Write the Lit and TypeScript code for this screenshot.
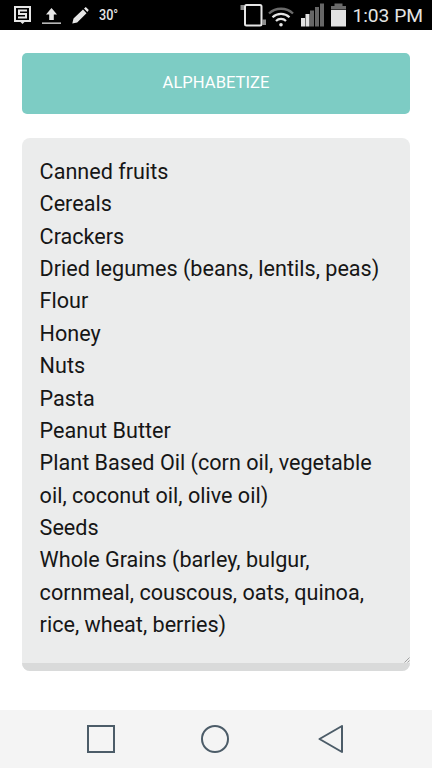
import { LitElement, html, css } from "lit";
import { customElement } from "lit/decorators.js";

const ITEMS = [
  "Canned fruits",
  "Cereals",
  "Crackers",
  "Dried legumes (beans, lentils, peas)",
  "Flour",
  "Honey",
  "Nuts",
  "Pasta",
  "Peanut Butter",
  "Plant Based Oil (corn oil, vegetable oil, coconut oil, olive oil)",
  "Seeds",
  "Whole Grains (barley, bulgur, cornmeal, couscous, oats, quinoa, rice, wheat, berries)",
];

@customElement("app-root")
export class AppRoot extends LitElement {
  static styles = css`
    :host {
      display: flex;
      flex-direction: column;
      width: 432px;
      height: 768px;
      overflow: hidden;
      background: #fff;
      font-family: Roboto, "Liberation Sans", sans-serif;
    }
    .status {
      height: 30px;
      flex: none;
      background: #000;
      color: #e6e6e6;
      display: flex;
      align-items: center;
      padding: 0 9px 0 14px;
      box-sizing: border-box;
    }
    .status svg { display: block; flex: none; }
    .left { display: flex; align-items: center; gap: 11px; }
    .temp {
      font-size: 15px;
      font-weight: 500;
      margin-left: -1px;
      margin-top: -1px;
      transform: scaleX(0.84);
      transform-origin: left;
    }
    .right { margin-left: auto; display: flex; align-items: center; }
    .wifi { margin-left: 2px; }
    .signal { margin-left: 7px; }
    .battery { margin-left: 7px; }
    .time { font-size: 19.2px; margin-left: 6px; margin-top: 1px; color: #e4e4e4; white-space: nowrap; }
    main {
      flex: 1;
      min-height: 0;
      padding: 23px 22px 0;
      display: flex;
      flex-direction: column;
      gap: 24px;
    }
    .btn {
      height: 61px;
      flex: none;
      box-sizing: border-box;
      padding-bottom: 3px;
      background: #7dccc4;
      border-radius: 5px;
      color: #fff;
      font-size: 16.6px;
      display: flex;
      align-items: center;
      justify-content: center;
    }
    .box {
      position: relative;
      height: 532.5px;
      flex: none;
      overflow: hidden;
      background: #ebecec;
      border-radius: 8px;
      display: flex;
      flex-direction: column;
      font-size: 21.6px;
      line-height: 32.36px;
      color: #161616;
    }
    .list { flex: 1; min-height: 0; padding: 18px 18px 0 17.6px; }
    .strip { height: 7.5px; flex: none; background: #d9dada; }
    .grip { position: absolute; right: 0; bottom: 7.5px; display: block; }
    nav {
      height: 58px;
      flex: none;
      background: #f4f4f4;
      display: flex;
      align-items: center;
      padding-left: 87px;
      gap: 86px;
    }
    nav svg { display: block; flex: none; }
    .back { margin-left: 3px; }
  `;

  render() {
    return html`
      <div class="status">
        <div class="left">
          <svg width="17" height="30" viewBox="14 0 17 30">
            <path fill-rule="evenodd" d="M14 6h17v16h-6.500l-2 2-2-2h-6.500z M16 8v12h13v-12z" fill="#e6e6e6"/>
            <path d="M18 9.500h9v2h-7v1.500h7v5.500h-9v-2h7v-1.500h-7z" fill="#e6e6e6"/>
          </svg>
          <svg width="19" height="30" viewBox="42 0 19 30">
            <path d="M51.500 8l5.500 6.500h-3.200v5.500h-4.600v-5.500h-3.200z" fill="#e6e6e6"/>
            <path d="M42 22.500h19v1.300h-19z" fill="#e6e6e6"/>
          </svg>
          <svg width="17" height="30" viewBox="72 0 17 30">
            <path d="M72.300 23.500l1.200-5 9.500-9 3.500 3.800-9.300 9.200z M84 8.500l1.800-1.500 3 3-1.500 2z" fill="#e6e6e6"/>
          </svg>
          <span class="temp">30°</span>
        </div>
        <div class="right">
          <svg width="26" height="30" viewBox="242 0 26 30">
            <path d="M242.500 5h3.500v5h-3.500z M264.500 19.500h3.500v5.500h-3.500z" fill="#8d8d8d"/>
            <rect x="247" y="5" width="16.500" height="20.500" rx="1.500" fill="none" stroke="#e6e6e6" stroke-width="2"/>
          </svg>
          <svg class="wifi" width="26" height="30" viewBox="270 0 26 30">
            <path d="M271 13.500a17.500 17.500 0 0 1 24 0" fill="none" stroke="#6a6a6a" stroke-width="2.400"/>
            <path d="M274.500 17.300a12.500 12.500 0 0 1 17 0 M278 21a7 7 0 0 1 10 0" fill="none" stroke="#e6e6e6" stroke-width="2.200"/>
            <circle cx="283" cy="24.800" r="1.800" fill="#e6e6e6"/>
          </svg>
          <svg class="signal" width="23" height="30" viewBox="303 0 23 30">
            <path d="M303 18h4v8.500h-4z M307.500 14h4v12.500h-4z" fill="#e2e2e2"/>
            <path d="M312 10.500h4v16h-4z M317 7h4v19.500h-4z M322 3.500h4v23h-4z" fill="#666"/>
          </svg>
          <svg class="battery" width="15" height="30" viewBox="333 0 15 30">
            <path d="M336.500 3.500h8v2.500h-8z M333 6h15v3.500h-15z" fill="#6a6a6a"/>
            <path d="M333 10h15v16.500h-15z" fill="#e2e2e2"/>
          </svg>
          <span class="time">1:03 PM</span>
        </div>
      </div>
      <main>
        <div class="btn">ALPHABETIZE</div>
        <div class="box">
          <div class="list">${ITEMS.map((t) => html`<div>${t}</div>`)}</div>
          <div class="strip"></div>
          <svg class="grip" width="6" height="6" viewBox="0 0 6 6">
            <path d="M5.500 0.500l-5 5 M5.500 3.500l-2 2" stroke="#a0a0a0" stroke-width="1" fill="none"/>
          </svg>
        </div>
      </main>
      <nav>
        <svg width="28" height="28" viewBox="0 0 28 28"><rect x="1" y="1" width="26" height="26" fill="none" stroke="#4c5c68" stroke-width="2"/></svg>
        <svg width="28" height="28" viewBox="0 0 28 28"><circle cx="14" cy="14" r="13" fill="none" stroke="#4c5c68" stroke-width="2"/></svg>
        <svg class="back" width="25" height="28" viewBox="0 0 25 28"><path d="M24 1v26l-22.500-13z" fill="none" stroke="#4c5c68" stroke-width="2" stroke-linejoin="round"/></svg>
      </nav>
    `;
  }
}
